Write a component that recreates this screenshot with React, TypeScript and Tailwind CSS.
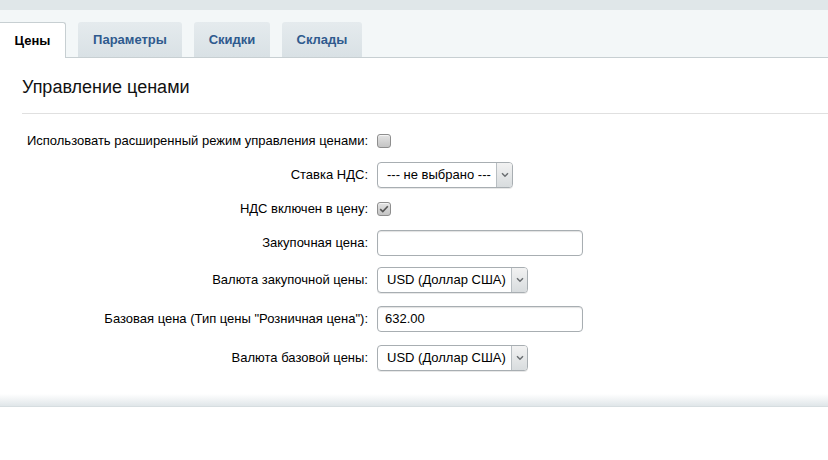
import React from "react";

const font = { fontFamily: '"Liberation Sans", Arial, sans-serif' };

function Checkbox({ checked }: { checked?: boolean }) {
  return (
    <div className="relative h-[14px] w-[14px] rounded-[3px] border border-[#8e8e8e] bg-gradient-to-b from-[#e4e4e4] to-[#c4c4c4] shadow-[inset_0_1px_0_#f4f4f4]">
      {checked && (
        <svg viewBox="0 0 14 14" className="absolute left-[-1px] top-[-1px] h-[14px] w-[14px]">
          <path d="M3.2 7.2 L5.8 9.6 L10.8 4.2" fill="none" stroke="#555" strokeWidth="1.6" />
        </svg>
      )}
    </div>
  );
}

function Select({ value, width }: { value: string; width: string }) {
  return (
    <div className={`flex h-[26px] ${width} items-stretch overflow-hidden rounded-[4px] border border-[#a8aeb2] bg-white shadow-[0_1px_0_#e8e8e8]`}>
      <div className="flex flex-1 items-center pl-[9px] text-[13px] text-black">{value}</div>
      <div className="flex w-[16px] items-center justify-center border-l border-[#b8bec2] bg-gradient-to-b from-[#f2f2f2] to-[#d8dcde]">
        <svg viewBox="0 0 8 6" className="h-[6px] w-[8px]">
          <path d="M1 1.2 L4 4.2 L7 1.2" fill="none" stroke="#6b6f72" strokeWidth="1.5" />
        </svg>
      </div>
    </div>
  );
}

function Input({ value }: { value?: string }) {
  return (
    <div className="flex h-[26px] w-[206px] items-center rounded-[4px] border border-[#a8aeb2] bg-white pl-[7px] text-[13px] text-black shadow-[inset_0_1px_1px_#e2e2e2]">
      {value}
    </div>
  );
}

function Row({ label, h, children }: { label: string; h: string; children: React.ReactNode }) {
  return (
    <div className={`flex ${h} items-center`}>
      <div className="w-[370px] pr-[2px] text-right text-[13px] text-black">{label}</div>
      <div className="ml-[7px] flex items-center">{children}</div>
    </div>
  );
}

export default function App() {
  return (
    <div className="h-[460px] w-[828px] overflow-hidden bg-white" style={font}>
      <div className="h-[10px] bg-[#e0e7e9]" />
      <div className="flex h-[48px] items-end gap-[12px] border-b border-[#c7cfd2] bg-[#f3f7f8]">
        <div className="-mb-px flex h-[36px] w-[66px] items-center justify-center rounded-tr-[3px] border-r border-t border-[#c7cfd2] bg-white text-[13px] font-bold text-black">
          Цены
        </div>
        <div className="flex h-[35px] w-[104px] items-center justify-center rounded-t-[3px] bg-gradient-to-b from-[#e5ebee] to-[#d9e1e5] text-[13px] font-bold text-[#2f5a8e]">
          Параметры
        </div>
        <div className="flex h-[35px] w-[76px] items-center justify-center rounded-t-[3px] bg-gradient-to-b from-[#e5ebee] to-[#d9e1e5] text-[13px] font-bold text-[#2f5a8e]">
          Скидки
        </div>
        <div className="flex h-[35px] w-[80px] items-center justify-center rounded-t-[3px] bg-gradient-to-b from-[#e5ebee] to-[#d9e1e5] text-[13px] font-bold text-[#2f5a8e]">
          Склады
        </div>
      </div>
      <div className="pl-[22px]">
        <div className="flex h-[56px] items-center border-b border-[#e0e0e0] pt-[4px] text-[18px] text-[#111]">
          Управление ценами
        </div>
      </div>
      <div className="pt-[10px]">
        <Row label="Использовать расширенный режим управления ценами:" h="h-[34px]">
          <Checkbox />
        </Row>
        <Row label="Ставка НДС:" h="h-[34px]">
          <Select value="--- не выбрано ---" width="w-[136px]" />
        </Row>
        <Row label="НДС включен в цену:" h="h-[33px]">
          <Checkbox checked />
        </Row>
        <Row label="Закупочная цена:" h="h-[36px]">
          <Input />
        </Row>
        <Row label="Валюта закупочной цены:" h="h-[38px]">
          <Select value="USD (Доллар США)" width="w-[151px]" />
        </Row>
        <Row label={'Базовая цена (Тип цены "Розничная цена"):'} h="h-[39px]">
          <Input value="632.00" />
        </Row>
        <Row label="Валюта базовой цены:" h="h-[39px]">
          <Select value="USD (Доллар США)" width="w-[151px]" />
        </Row>
      </div>
      <div className="mt-[17px] h-[13px] border-b border-[#d6dde0] bg-gradient-to-b from-white to-[#e0e6e9]" />
    </div>
  );
}
